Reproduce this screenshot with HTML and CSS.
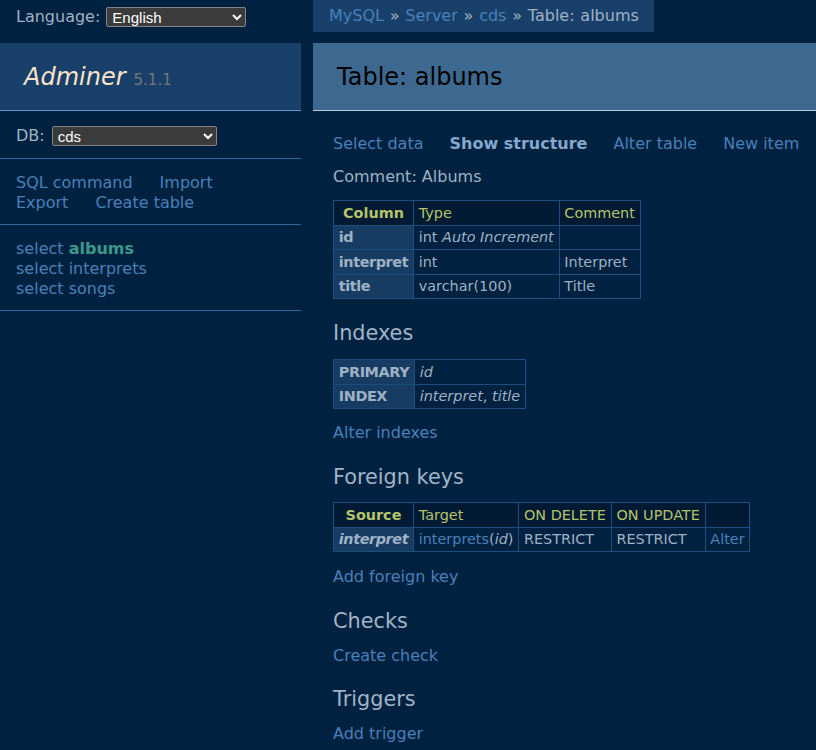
FILE: index.html
```
<!DOCTYPE html>
<html lang="en">
<head>
    <title>Table: albums - Adminer</title>
    <link rel="stylesheet" href="styles.css">
</head>
<body>
    <div class="page">
        <aside class="menu">
            <div class="lang">
                <label>Language:</label>
                <select class="lang-select">
                    <option>English</option>
                </select>
            </div>
            <h1 class="logo"><a href="#">Adminer</a> <span class="version">5.1.1</span></h1>
            <div class="section db">
                <label>DB:</label>
                <select class="db-select">
                    <option>cds</option>
                </select>
            </div>
            <div class="section links side-links">
                <a href="#">SQL command</a>
                <a href="#">Import</a>
                <a href="#">Export</a>
                <a href="#">Create table</a>
            </div>
            <ul class="section tables">
                <li><a href="#">select</a> <a href="#" class="active">albums</a></li>
                <li><a href="#">select</a> <a href="#">interprets</a></li>
                <li><a href="#">select</a> <a href="#">songs</a></li>
            </ul>
        </aside>

        <main class="content">
            <p class="breadcrumb">
                <a href="#">MySQL</a> » <a href="#">Server</a> » <a href="#">cds</a> » Table: albums
            </p>
            <h2>Table: albums</h2>

            <div class="body">
                <p class="links main-links">
                    <a href="#">Select data</a>
                    <a href="#" class="current">Show structure</a>
                    <a href="#">Alter table</a>
                    <a href="#">New item</a>
                </p>
                <p class="comment">Comment: Albums</p>

                <table class="columns">
                    <thead>
                        <tr><th>Column</th><td>Type</td><td>Comment</td></tr>
                    </thead>
                    <tbody>
                        <tr><th>id</th><td>int <i>Auto Increment</i></td><td></td></tr>
                        <tr><th>interpret</th><td>int</td><td>Interpret</td></tr>
                        <tr><th>title</th><td>varchar(100)</td><td>Title</td></tr>
                    </tbody>
                </table>

                <h3>Indexes</h3>
                <table class="indexes">
                    <tbody>
                        <tr><th>PRIMARY</th><td><i>id</i></td></tr>
                        <tr><th>INDEX</th><td><i>interpret</i>, <i>title</i></td></tr>
                    </tbody>
                </table>
                <p class="after-table"><a href="#">Alter indexes</a></p>

                <h3>Foreign keys</h3>
                <table class="fk">
                    <thead>
                        <tr><th>Source</th><td>Target</td><td>ON DELETE</td><td>ON UPDATE</td><td></td></tr>
                    </thead>
                    <tbody>
                        <tr>
                            <th><i>interpret</i></th>
                            <td><a href="#">interprets</a>(<i>id</i>)</td>
                            <td>RESTRICT</td>
                            <td>RESTRICT</td>
                            <td><a href="#">Alter</a></td>
                        </tr>
                    </tbody>
                </table>
                <p class="after-table fk-add"><a href="#">Add foreign key</a></p>

                <h3>Checks</h3>
                <p><a href="#">Create check</a></p>

                <h3 class="triggers">Triggers</h3>
                <p><a href="#">Add trigger</a></p>
            </div>
        </main>
    </div>
</body>
</html>
```

FILE: styles.css
```
html {
    color-scheme: dark;
}
body {
    margin: 0;
    background: #002240;
    color: #9fb2c5;
    font-family: 'DejaVu Sans', Verdana, sans-serif;
    font-size: 16px;
    line-height: 20px;
}
a {
    color: #4a80b9;
    text-decoration: none;
}
p {
    margin: 12px 0 0;
}
.page {
    display: flex;
    gap: 12px;
}

/* sidebar */
.menu {
    width: 301px;
    flex-shrink: 0;
}
.lang {
    height: 34px;
    margin-bottom: 9px;
    padding: 0 16px;
    display: flex;
    align-items: center;
    gap: 6px;
}
select {
    height: 20px;
    padding: 0 0 0 1px;
    background: #3b3b3b;
    color: #fff;
    border: 1px solid #858585;
    border-radius: 2px;
    font-family: 'Liberation Sans', Arial, sans-serif;
    font-size: 15px;
}
.lang-select { width: 140px; }
.db-select { width: 165px; }
.logo {
    margin: 0;
    height: 67px;
    padding: 0 24px;
    display: flex;
    align-items: center;
    gap: 8px;
    background: #19406a;
    border-bottom: 1px solid #5d95cd;
    font-size: 24px;
    font-weight: normal;
}
.logo a {
    color: #fbe3c8;
    font-style: italic;
}
.version {
    color: #767676;
    font-size: 15px;
    margin-top: 6px;
}
.section {
    margin: 0;
    padding: 14px 16px 11px;
    border-bottom: 1px solid #2c68a3;
    list-style: none;
}
.db {
    padding-top: 15px;
    padding-bottom: 12px;
    display: flex;
    align-items: center;
    gap: 7px;
}
.side-links {
    display: flex;
    flex-wrap: wrap;
    column-gap: 27px;
}
.tables li a.active {
    color: #3c998c;
    font-weight: bold;
}

/* main column */
.content {
    flex: 1;
    min-width: 0;
}
.breadcrumb {
    display: inline-block;
    margin: 0;
    padding: 6px 15px 6px 16px;
    background: #19406a;
    word-spacing: 0.7px;
}
.content h2 {
    margin: 11px 0 0;
    height: 67px;
    padding: 0 24px;
    display: flex;
    align-items: center;
    background: #3d688f;
    border-bottom: 1px solid #b9cde0;
    color: #000;
    font-size: 24px;
    font-weight: normal;
}
.body {
    padding-left: 20px;
}
.main-links {
    margin-top: 23px;
    display: flex;
    gap: 26px;
    white-space: nowrap;
}
.main-links .current {
    color: #86a8cc;
    font-weight: bold;
}
.comment {
    margin-top: 13px;
}
h3 {
    margin: 21px 0 0;
    font-size: 20.8px;
    line-height: 26px;
    font-weight: normal;
    color: #a0b4c8;
}
h3.triggers {
    margin-top: 20px;
}
table {
    margin-top: 13px;
    border-collapse: collapse;
    font-size: 14.4px;
    line-height: 18px;
}
table.fk {
    margin-top: 12px;
}
th, td {
    border: 1px solid #1e4d80;
    padding: 2.75px 4.8px;
    text-align: left;
    color: #9fb2c5;
}
thead th, thead td {
    background: #001a33;
    color: #b5c46a;
}
thead th {
    text-align: center;
}
tbody th {
    background: #173c63;
    letter-spacing: -0.4px;
}
.after-table {
    margin-top: 14px;
}
.fk-add {
    margin-top: 15px;
}
```
